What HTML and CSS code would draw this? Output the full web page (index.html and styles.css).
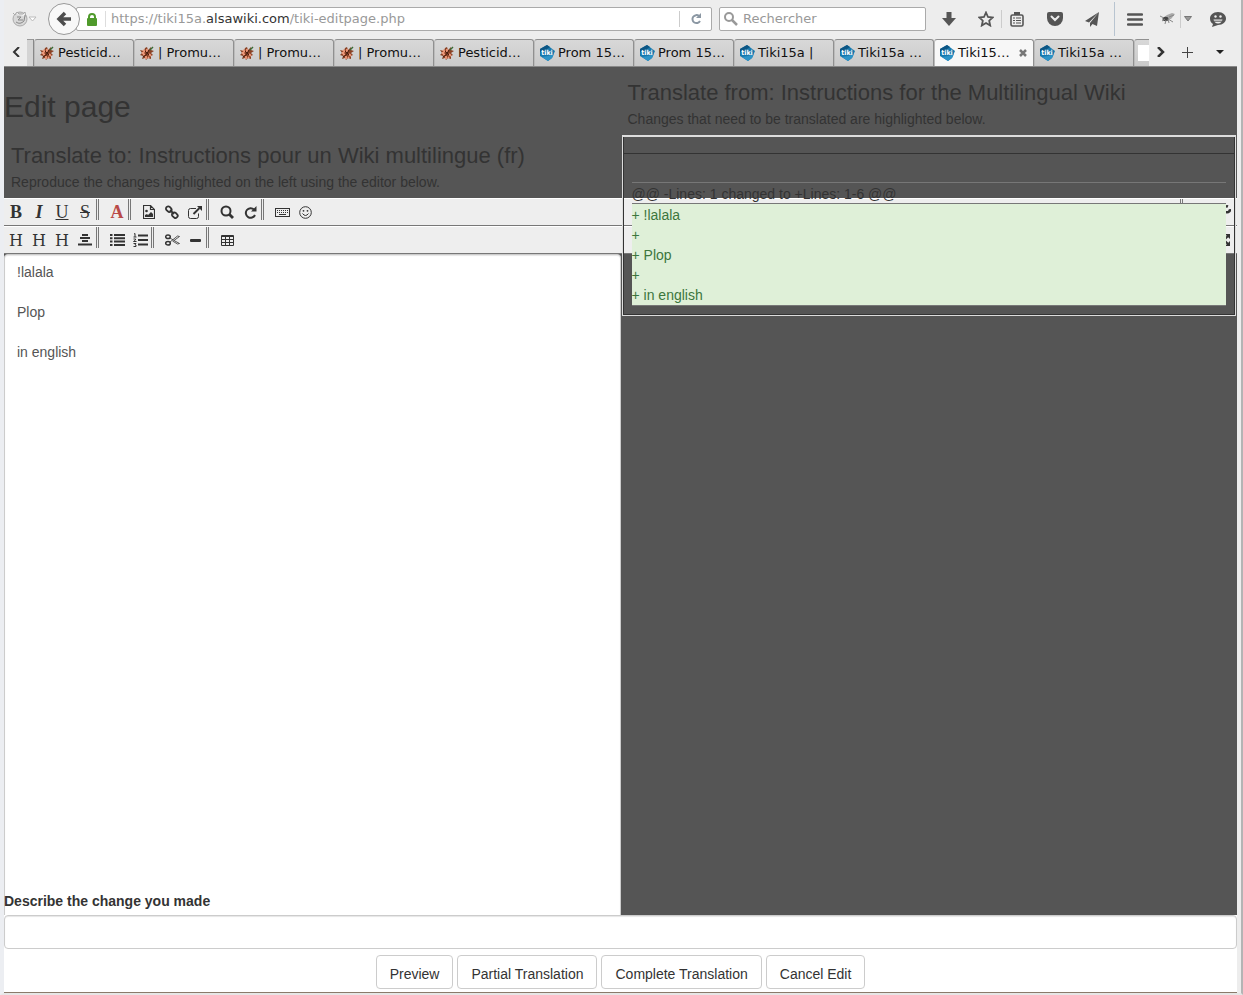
FILE: index.html
```html
<!DOCTYPE html>
<html lang="en">
<head>
<meta charset="utf-8">
<meta name="viewport" content="width=device-width, initial-scale=1">
<title>Tiki15a | Edit page</title>
<link rel="stylesheet" href="styles.css">
</head>
<body>

<!-- shared icons -->
<svg class="defs" aria-hidden="true">
  <symbol id="nut" viewBox="0 0 14 14">
    <path d="M7 1l1 3 3-3v3l3 1-3 2 2 2-2 1v3l-3-1-2 2-1-2-3 1 1-3-3-1 2-2-2-3 4 1 1-3z" fill="#8a4226"/>
    <path d="M3 4l2 2M7 3v4M5 8l-2 1M9 8l2 2M6 10v3M8 11l1 1M2 7h2" stroke="#f09a7c" stroke-width="1.800"/>
    <path d="M5 5l4 4M9 4l-3 5M3 11l3-2" stroke="#4a1d10"/>
    <path d="M10 4l3-3" stroke="#3b6b35" stroke-width="1.500"/>
  </symbol>
  <symbol id="tiki" viewBox="0 0 16 16">
    <path d="M1 4l7-4 8 6-3 7-4 3-8-5z" fill="#1578ad"/>
    <path d="M1 4l7-4 3 2-6 4-4 1z" fill="#0c5584"/>
    <path d="M3 12l6 4 4-3 2-4-6 2z" fill="#2b93c8"/>
  </symbol>
</svg>

<div class="window">
  <div class="navbar">
    <button class="nav-btn identity" aria-label="Firefox">
      <svg width="26" height="18" viewBox="0 0 26 18"><circle cx="8" cy="9" r="7" fill="#d8d8d8" stroke="#aaa"/><path d="M1 3l2 2 2-3 2 2h4l2-2 1 5" fill="#eee" stroke="#aaa"/><path d="M5 7h4l-3 3h5M4 12q4 3 8-1l1-6" fill="none" stroke="#888"/><path d="M17 7h7l-3.500 4z" fill="#fff" stroke="#bbb"/></svg>
    </button>
    <button class="back" aria-label="Back">
      <svg width="16" height="16" viewBox="0 0 16 16"><path d="M9 2L3 8l6 6M3 8h12" fill="none" stroke="#4d4d4d" stroke-width="3.500"/></svg>
    </button>
    <div class="urlbar">
      <svg class="lock" width="10" height="13" viewBox="0 0 10 13"><rect y="5" width="10" height="8" rx="1" fill="#4f9a2b"/><path d="M2 6V4a3 3 0 0 1 6 0v2" fill="none" stroke="#4f9a2b" stroke-width="2"/></svg>
      <div class="url" role="textbox" aria-label="Address" contenteditable="true" spellcheck="false">https://tiki15a.<b>alsawiki.com</b>/tiki-editpage.php</div>
      <button class="reload" aria-label="Reload">
        <svg width="12" height="12" viewBox="0 0 12 12"><path d="M9 3a4 4 0 1 0 1 5" fill="none" stroke="#8b97a3" stroke-width="2"/><path d="M11 0v5H6z" fill="#8b97a3"/></svg>
      </button>
    </div>
    <div class="searchbar">
      <svg width="14" height="14" viewBox="0 0 14 14"><circle cx="5" cy="5" r="4" fill="none" stroke="#999" stroke-width="2"/><path d="M8 8l5 5" stroke="#999" stroke-width="2.500"/></svg>
      <input type="text" placeholder="Rechercher" aria-label="Rechercher">
    </div>
    <div class="nav-icons">
      <button class="nav-btn" aria-label="Downloads">
        <svg width="14" height="14" viewBox="0 0 14 14"><path d="M4.500 0h5v6H14l-7 8-7-8h4.500z" fill="#555"/></svg>
      </button>
      <button class="nav-btn star" aria-label="Bookmark">
        <svg width="16" height="16" viewBox="0 0 16 16"><path d="M8 1.500l2 4.500 4.700.5-3.500 3.200 1 4.800L8 12l-4.200 2.500 1-4.800L1.300 6.500 6 6z" fill="none" stroke="#555" stroke-width="1.800"/></svg>
      </button>
      <button class="nav-btn clip" aria-label="Bookmark list">
        <svg width="14" height="15" viewBox="0 0 14 15"><rect x="1" y="3" width="12" height="11" rx="1.500" fill="none" stroke="#555" stroke-width="1.600"/><path d="M4 0h6v3H4z" fill="#555"/><path d="M3 6h2M6 6h5M3 8.500h2M6 8.500h5M3 11h2M6 11h5" stroke="#555" stroke-width="1.200"/></svg>
      </button>
      <button class="nav-btn pocket" aria-label="Pocket">
        <svg width="16" height="14" viewBox="0 0 16 14"><path d="M2 0h12a2 2 0 0 1 2 2v4a8 8 0 0 1-16 0V2a2 2 0 0 1 2-2z" fill="#555"/><path d="M4.500 4.500L8 8l3.500-3.500" fill="none" stroke="#eee" stroke-width="2" stroke-linecap="round"/></svg>
      </button>
      <button class="nav-btn plane" aria-label="Share">
        <svg width="15" height="15" viewBox="0 0 15 15"><path d="M14 0L0 9l4 1.500zM14 0L5 11v4l2.500-3 4.500 2z" fill="#555"/></svg>
      </button>
      <button class="nav-btn menu" aria-label="Menu">
        <svg width="16" height="13" viewBox="0 0 16 13"><path d="M1 1.500h14M1 6.500h14M1 11.500h14" stroke="#555" stroke-width="2.500" stroke-linecap="round"/></svg>
      </button>
      <button class="nav-btn fly" aria-label="Firebug">
        <svg width="15" height="12" viewBox="0 0 15 12"><path d="M3 5l4-3 5-2 3 1-4 5-5 1z" fill="#aaa"/><ellipse cx="5.500" cy="6" rx="3" ry="2.200" fill="#444"/><path d="M0 3l4 2M2 8l3-2M5 11l1-4M9 10L8 6l5 3M9 4l5-2" fill="none" stroke="#888"/></svg>
      </button>
      <button class="nav-btn fly-more" aria-label="Firebug options">
        <svg width="8" height="6" viewBox="0 0 8 6"><path d="M.5.5h7L4 5z" fill="#999" stroke="#777"/></svg>
      </button>
      <button class="nav-btn chat" aria-label="Hello">
        <svg width="16" height="15" viewBox="0 0 16 15"><path d="M8 0c5 0 8 3 8 6.500S13 13 8 13l-6 2 1-3C1 11 0 9 0 6.500 0 3 3 0 8 0z" fill="#555"/><path d="M3.500 7.500h9q-1 4-4.500 4t-4.500-4z" fill="#eee"/><path d="M4 9.200h8" stroke="#555"/><circle cx="5.500" cy="4.500" r="1.200" fill="#eee"/><circle cx="10.500" cy="4.500" r="1.200" fill="#eee"/></svg>
      </button>
    </div>
  </div>

  <div class="tabbar">
    <button class="scroll-btn" aria-label="Previous tabs">
      <svg width="8" height="10" viewBox="0 0 8 10"><path d="M7 0L2 5l5 5" fill="none" stroke="#333" stroke-width="2"/></svg>
    </button>
    <div class="tabs">
      <div class="tab-edge"></div>
      <button class="tab"><svg class="nut"><use href="#nut"/></svg>Pesticid…</button>
      <button class="tab"><svg class="nut"><use href="#nut"/></svg>| Promu…</button>
      <button class="tab"><svg class="nut"><use href="#nut"/></svg>| Promu…</button>
      <button class="tab"><svg class="nut"><use href="#nut"/></svg>| Promu…</button>
      <button class="tab"><svg class="nut"><use href="#nut"/></svg>Pesticid…</button>
      <button class="tab"><svg class="tiki"><use href="#tiki"/><text x="8" y="10">tiki</text></svg>Prom 15…</button>
      <button class="tab"><svg class="tiki"><use href="#tiki"/><text x="8" y="10">tiki</text></svg>Prom 15…</button>
      <button class="tab"><svg class="tiki"><use href="#tiki"/><text x="8" y="10">tiki</text></svg>Tiki15a |</button>
      <button class="tab"><svg class="tiki"><use href="#tiki"/><text x="8" y="10">tiki</text></svg>Tiki15a …</button>
      <button class="tab active"><svg class="tiki"><use href="#tiki"/><text x="8" y="10">tiki</text></svg>Tiki15…
        <svg class="close" width="8" height="8" viewBox="0 0 8 8"><path d="M1 1l6 6M7 1L1 7" stroke="#777" stroke-width="2.500"/></svg>
      </button>
      <button class="tab"><svg class="tiki"><use href="#tiki"/><text x="8" y="10">tiki</text></svg>Tiki15a …</button>
      <button class="tab" aria-label="Blank tab"><span class="blank"></span></button>
    </div>
    <div class="tab-tools">
      <button class="scroll-btn" aria-label="Next tabs">
        <svg width="8" height="10" viewBox="0 0 8 10"><path d="M1 0l5 5-5 5" fill="none" stroke="#333" stroke-width="2.500"/></svg>
      </button>
      <button class="scroll-btn" aria-label="New tab">
        <svg width="11" height="11" viewBox="0 0 11 11"><path d="M5.500 0v11M0 5.500h11" stroke="#444"/></svg>
      </button>
      <button class="scroll-btn" aria-label="All tabs">
        <svg width="8" height="4" viewBox="0 0 8 4"><path d="M0 0h8L4 4z" fill="#222"/></svg>
      </button>
    </div>
  </div>

  <div class="page">
    <div class="target">
      <h1>Edit page</h1>
      <h2>Translate to: Instructions pour un Wiki multilingue (fr)</h2>
      <p>Reproduce the changes highlighted on the left using the editor below.</p>
    </div>

    <div class="toolbar">
      <div class="group">
        <button class="tool bold" title="Bold">B</button>
        <button class="tool italic" title="Italic">I</button>
        <button class="tool underline" title="Underline">U</button>
        <button class="tool strike" title="Strikethrough">S</button>
      </div>
      <div class="group">
        <button class="tool color" title="Text color">A</button>
      </div>
      <div class="group">
        <button class="tool" title="Image">
          <svg width="12" height="14" viewBox="0 0 12 14"><path d="M.5.5h7l4 4v9H.5zM7.500.5v4h4" fill="none" stroke="#333" stroke-width="1.200"/><path d="M2 12v-2l2-1 1 1 3-3 2 2v3z" fill="#333"/><circle cx="3.500" cy="6" r="1.300" fill="#333"/></svg>
        </button>
        <button class="tool" title="Link">
          <svg width="14" height="14" viewBox="0 0 14 14"><g fill="none" stroke="#333" stroke-width="1.800"><rect x="1" y="2" width="6" height="4.500" rx="2" transform="rotate(45 4 4)"/><rect x="7" y="8" width="6" height="4.500" rx="2" transform="rotate(45 10 10)"/><path d="M5 5l4 4"/></g></svg>
        </button>
        <button class="tool" title="External link">
          <svg width="14" height="13" viewBox="0 0 14 13"><path d="M8 2.500H2.500a2 2 0 0 0-2 2v6a2 2 0 0 0 2 2h6a2 2 0 0 0 2-2V7.500" fill="none" stroke="#333"/><path d="M5.500 8l6-6" stroke="#333" stroke-width="2"/><path d="M9 0h5v5z" fill="#333"/></svg>
        </button>
      </div>
      <div class="group">
        <button class="tool" title="Find">
          <svg width="14" height="14" viewBox="0 0 14 14"><circle cx="6" cy="6" r="4.500" fill="none" stroke="#333" stroke-width="2"/><path d="M9 9l4 4" stroke="#333" stroke-width="2.800"/></svg>
        </button>
        <button class="tool" title="Replace">
          <svg width="13" height="13" viewBox="0 0 13 13"><path d="M10 3.500A4.800 4.800 0 1 0 11 9" fill="none" stroke="#333" stroke-width="2"/><path d="M12.500 0v5.500H7z" fill="#333"/></svg>
        </button>
      </div>
      <div class="group last">
        <button class="tool" title="Special characters">
          <svg width="15" height="9" viewBox="0 0 15 9"><rect x=".5" y=".5" width="14" height="8" fill="none" stroke="#333"/><path d="M2 2.500h11M2 4.500h11" stroke="#333" stroke-dasharray="1 1"/><path d="M4 6.500h7" stroke="#333"/></svg>
        </button>
        <button class="tool" title="Smileys">
          <svg width="13" height="13" viewBox="0 0 13 13"><circle cx="6.500" cy="6.500" r="5.800" fill="none" stroke="#333"/><circle cx="4.500" cy="4.800" r=".9" fill="#333"/><circle cx="8.500" cy="4.800" r=".9" fill="#333"/><path d="M3.500 7.500q3 4 6 0" fill="none" stroke="#333"/></svg>
        </button>
      </div>
      <div class="group last right">
        <button class="tool" title="Help">?</button>
        <button class="tool" title="Admin toolbars">
          <svg width="14" height="14" viewBox="0 0 14 14"><path d="M1 12l6-6" stroke="#333" stroke-width="3"/><path d="M13 4A3 3 0 1 1 11 1.500" fill="none" stroke="#333" stroke-width="2.500"/></svg>
        </button>
      </div>
    </div>

    <div class="toolbar">
      <div class="group">
        <button class="tool heading" title="Heading 1">H</button>
        <button class="tool heading" title="Heading 2">H</button>
        <button class="tool heading" title="Heading 3">H</button>
        <button class="tool" title="Center">
          <svg width="14" height="12" viewBox="0 0 14 12"><path d="M4 1h6M2 4h10M4 7h6M0 10.500h14" stroke="#333" stroke-width="2"/></svg>
        </button>
      </div>
      <div class="group">
        <button class="tool" title="Bullet list">
          <svg width="15" height="12" viewBox="0 0 15 12"><path d="M0 1h2.500M4 1h11M0 4.300h2.500M4 4.300h11M0 7.600h2.500M4 7.600h11M0 11h2.500M4 11h11" stroke="#333" stroke-width="2"/></svg>
        </button>
        <button class="tool" title="Numbered list">
          <svg width="15" height="14" viewBox="0 0 15 14"><path d="M5 2.500h10M5 7h10M5 11.500h10" stroke="#333" stroke-width="2"/><path d="M1 1l1-.5V4M.5 4h3M.5 6h2v1l-2 1.500h3M.5 10.500h2.500l-1 1.200 1 .3v1.500H.5" fill="none" stroke="#333"/></svg>
        </button>
      </div>
      <div class="group">
        <button class="tool" title="Cut">
          <svg width="15" height="12" viewBox="0 0 15 12"><g fill="none" stroke="#333"><ellipse cx="3" cy="2.800" rx="2.300" ry="1.800" stroke-width="1.500"/><ellipse cx="3" cy="9.200" rx="2.300" ry="1.800" stroke-width="1.500"/><path d="M5 4l4 2.500 5.500-4-2-.5-7.500 6M9 6.500l5.500 3-2 .5-5-3" stroke-width=".8"/></g></svg>
        </button>
        <button class="tool" title="Horizontal rule">
          <svg width="11" height="3" viewBox="0 0 11 3"><rect width="11" height="3" rx="1" fill="#333"/></svg>
        </button>
      </div>
      <div class="group last">
        <button class="tool" title="Table">
          <svg width="13" height="11" viewBox="0 0 13 11"><path d="M.5.5h12v10H.5zM.5 4.500h12M.5 7.500h12M4.500 1v9.500M8.500 1v9.500M.5 1.500h12" fill="none" stroke="#333"/></svg>
        </button>
      </div>
      <div class="group last full">
        <button class="tool" title="Fullscreen">
          <svg width="12" height="12" viewBox="0 0 12 12"><path d="M1 1l10 10M11 1L1 11" stroke="#333" stroke-width="2"/><path d="M0 0h5L0 5zM12 0v5L7 0zM0 12V7l5 5zM12 12H7l5-5z" fill="#333"/></svg>
        </button>
      </div>
    </div>

    <div class="editor">
      <textarea aria-label="Page content" spellcheck="false">!lalala

Plop

in english</textarea>
      <label for="comment">Describe the change you made</label>
    </div>

    <!-- source panel lies over the toolbars in fullscreen mode -->
    <div class="source">
      <h2>Translate from: Instructions for the Multilingual Wiki</h2>
      <p>Changes that need to be translated are highlighted below.</p>
      <div class="diff">
        <div class="diff-head"></div>
        <div class="diff-body">
          <table>
            <tr><th>@@ -Lines: 1 changed to +Lines: 1-6 @@</th></tr>
            <tr><td>+ !lalala<br>+<br>+ Plop<br>+<br>+ in english</td></tr>
          </table>
        </div>
      </div>
    </div>
  </div>

  <div class="actions">
    <input type="text" id="comment" name="comment">
    <div class="buttons">
      <button class="btn">Preview</button>
      <button class="btn">Partial Translation</button>
      <button class="btn">Complete Translation</button>
      <button class="btn">Cancel Edit</button>
    </div>
  </div>
</div>

</body>
</html>
```
FILE: styles.css
```css
* {
  box-sizing: border-box;
}
body {
  margin: 0;
  font-family: "Liberation Sans", Arial, sans-serif;
  font-size: 14px;
  line-height: 20px;
  color: #333;
  background: #ededed;
}
button {
  border: none;
  padding: 0;
  background: none;
  font: inherit;
  color: inherit;
  cursor: pointer;
}
svg {
  display: block;
  flex: none;
}
h1, h2, p {
  margin: 0;
  font-weight: normal;
}
.defs {
  display: none;
}
.window {
  display: flex;
  flex-direction: column;
  min-height: 100vh;
  border-left: 4px solid #eceef2;
  border-right: 2px solid #b4b4b4;
  border-bottom: 2px solid #e6e6e6;
  padding-right: 4px;
}

/* Browser bars */
.navbar {
  display: flex;
  align-items: center;
  height: 38px;
  padding-left: 8px;
  font-family: "DejaVu Sans", sans-serif;
  font-size: 13px;
}
.nav-btn {
  display: flex;
  align-items: center;
  justify-content: center;
}
.identity {
  width: 26px;
}
.back {
  display: flex;
  align-items: center;
  justify-content: center;
  width: 32px;
  height: 32px;
  margin-left: 10px;
  border: 1px solid #999;
  border-radius: 50%;
  background: #f8f8f8;
  z-index: 1;
}
.urlbar, .searchbar {
  display: flex;
  align-items: center;
  height: 24px;
  border: 1px solid #aaa;
  border-radius: 2px;
  background: #fff;
}
.urlbar {
  flex: 1;
  margin-left: -4px;
  padding-left: 10px;
}
.url {
  flex: 1;
  margin-left: 8px;
  padding-left: 5px;
  border-left: 1px solid #ddd;
  color: #999;
  line-height: 16px;
  white-space: nowrap;
  outline: none;
}
.url b {
  font-weight: normal;
  color: #333;
}
.reload {
  display: flex;
  align-items: center;
  justify-content: center;
  width: 32px;
  height: 16px;
  border-left: 1px solid #ccc;
}
.searchbar {
  width: 207px;
  margin-left: 7px;
  padding-left: 4px;
}
.searchbar input {
  flex: 1;
  min-width: 0;
  border: none;
  outline: none;
  padding: 0 0 0 5px;
  background: none;
  font: inherit;
}
.searchbar input::placeholder {
  color: #999;
  opacity: 1;
}
.nav-icons {
  display: flex;
  align-items: center;
  height: 38px;
  padding-left: 8px;
}
.nav-icons .nav-btn {
  width: 30px;
  height: 18px;
}
.nav-icons .star {
  width: 32px;
  margin-left: 6px;
  border-right: 1px solid #ccc;
}
.nav-icons .pocket {
  width: 38px;
  margin-left: 4px;
}
.nav-icons .plane {
  width: 42px;
  height: 34px;
  margin-left: -1px;
  padding-right: 2px;
  border-right: 1px solid #b8c4d0;
}
.nav-icons .menu {
  width: 40px;
}
.nav-icons .fly {
  width: 26px;
  border-right: 1px solid #ccc;
}
.nav-icons .fly-more {
  width: 14px;
}
.nav-icons .chat {
  width: 38px;
  margin-left: 4px;
}
.tabbar {
  display: flex;
  height: 29px;
  border-bottom: 1px solid #888;
  font-family: "DejaVu Sans", sans-serif;
  font-size: 13px;
  color: #111;
}
.scroll-btn {
  display: flex;
  align-items: center;
  justify-content: center;
  width: 23px;
}
.tabs {
  display: flex;
  flex: 1;
  min-width: 0;
  padding-top: 1px;
  overflow: hidden;
}
.tab-edge {
  flex: 0 0 7px;
  border-top: 1px solid #999;
  border-right: 1px solid #888;
  background: #d4d4d4;
}
.tab {
  display: flex;
  align-items: center;
  flex: 0 0 100px;
  padding-left: 5px;
  border: 1px solid #909090;
  border-left-color: #bbb;
  border-bottom: none;
  border-radius: 3px 3px 0 0;
  background: linear-gradient(#d8d8d8, #cacaca);
  white-space: nowrap;
}
.tab.active {
  background: #f7f7f7;
}
.tab .nut {
  width: 14px;
  height: 14px;
  margin-right: 4px;
}
.tab .tiki {
  width: 16px;
  height: 16px;
  margin: 0 3px 0 -1px;
}
.tab text {
  fill: #fff;
  font-family: "DejaVu Sans Condensed", sans-serif;
  font-size: 7px;
  font-weight: bold;
  text-anchor: middle;
}
.tab .close {
  margin: 0 6px 0 auto;
}
.tab .blank {
  width: 16px;
  height: 16px;
  margin-left: -2px;
  background: #fff;
}
.tab-tools {
  display: flex;
  width: 88px;
  justify-content: space-between;
}
.tab-tools .scroll-btn:last-child {
  width: 34px;
}

/* Wiki page */
.page {
  position: relative;
  flex: 1;
  display: flex;
  flex-direction: column;
  background: #555;
}
.target {
  width: 50%;
  padding: 23px 0 6px;
}
h1 {
  margin-bottom: 21px;
  font-size: 30px;
  line-height: 33px;
}
h2 {
  margin-bottom: 4px;
  font-size: 22px;
  line-height: 24px;
  white-space: nowrap;
}
.target h2, .target p {
  margin-left: 7px;
}
.toolbar {
  display: flex;
  height: 28px;
  padding-left: 1px;
  border-top: 1px solid #fff;
  border-bottom: 1px solid #777;
  background: #eee;
}
.group {
  display: flex;
  gap: 1px;
  height: 21px;
  margin-right: 7px;
  border-right: 3px double #777;
}
.group.last {
  border-right: none;
}
.group.right {
  margin-left: auto;
  margin-right: 2px;
  padding-left: 7px;
  border-left: 3px double #777;
}
.group.full {
  margin-left: auto;
  margin-right: 2px;
}
.tool {
  display: flex;
  align-items: center;
  justify-content: center;
  width: 22px;
  padding-top: 5px;
  font-family: "Liberation Serif", serif;
  font-size: 18px;
  line-height: 20px;
}
.bold, .color {
  font-weight: bold;
}
.italic {
  font-weight: bold;
  font-style: italic;
}
.underline {
  text-decoration: underline;
}
.strike {
  text-decoration: line-through;
}
.heading {
  padding-top: 7px;
  font-family: "DejaVu Serif", serif;
  font-size: 16px;
}
.color {
  color: #b94a48;
}
.editor {
  position: relative;
  flex: 1;
  display: flex;
  width: 50%;
  min-height: 300px;
}
.editor textarea {
  width: 100%;
  padding: 7px 12px;
  border: 1px solid #ccc;
  border-bottom: none;
  border-radius: 4px 4px 0 0;
  box-shadow: inset 0 1px 1px rgba(0, 0, 0, 0.1);
  outline: none;
  resize: none;
  background: #fff;
  font: inherit;
  color: #555;
}
.editor label {
  position: absolute;
  left: 0;
  bottom: 4px;
  font-weight: bold;
}
.source {
  position: absolute;
  top: 14px;
  right: 1px;
  width: 50%;
}
.source h2, .source p {
  margin-left: 8px;
}
.diff {
  margin: 6px 0 0 2px;
  border: 1px solid #ddd;
  border-top-width: 2px;
}
.diff-head, .diff-body {
  border: 1px solid #333;
  border-top: none;
}
.diff-head {
  height: 17px;
}
.diff-body {
  padding: 28px 8px 8px;
}
.diff table {
  width: 100%;
  border-collapse: collapse;
}
.diff th {
  padding: 2px 0 0;
  border-top: 1px solid #777;
  border-bottom: 1px solid #777;
  font-weight: normal;
  text-align: left;
  line-height: 18px;
}
.diff td {
  height: 101px;
  padding: 1px 0 0;
  border-bottom: 1px solid #777;
  background: #dff0d8;
  color: #3c763d;
}

/* Comment and submit buttons */
.actions {
  background: #fff;
  border-bottom: 1px solid #8a7a6a;
}
.actions input {
  display: block;
  width: 100%;
  height: 34px;
  padding: 6px 12px;
  border: 1px solid #ccc;
  border-radius: 4px;
  box-shadow: inset 0 1px 1px rgba(0, 0, 0, 0.1);
  outline: none;
  font: inherit;
}
.buttons {
  display: flex;
  justify-content: center;
  gap: 4px;
  padding: 6px 0 3px;
}
.btn {
  height: 34px;
  padding: 4px 13px 0;
  border: 1px solid #ccc;
  border-radius: 4px;
  background: #fff;
}
```
